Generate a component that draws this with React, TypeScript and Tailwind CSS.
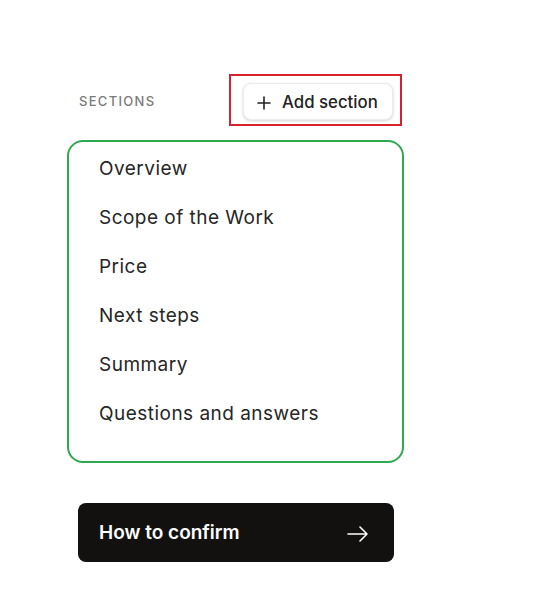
import React from "react";

const sections = [
  "Overview",
  "Scope of the Work",
  "Price",
  "Next steps",
  "Summary",
  "Questions and answers",
];

export default function App() {
  return (
    <div
      className="w-[550px] h-[613px] bg-white text-[#1f1f1f]"
      style={{ fontFamily: "Inter, 'Noto Sans', sans-serif" }}
    >
      <div className="pl-[67px] pt-[74px] w-[404px]">
        <div className="flex items-center justify-between h-[52px]">
          <span className="ml-[12px] mt-[4px] text-[13px] tracking-[0.1em] text-[#7a7a7a] font-medium">
            SECTIONS
          </span>
          <div className="border-2 border-[#d6232e] w-[173px] h-[52px] mr-[2px] pl-[12px] pt-[7px]">
            <button className="flex items-center gap-[11px] w-[150px] h-[37px] rounded-[8px] bg-white shadow-[0_1px_3px_rgba(0,0,0,0.18)] border border-[#ececec] pl-[13px] pt-[2px] text-[16.8px] font-medium text-[#222]">
              <svg width="14" height="14" viewBox="0 0 14 14" fill="none" stroke="#222" strokeWidth="1.6" strokeLinecap="round">
                <path d="M7 1v12M1 7h12" />
              </svg>
              <span>Add section</span>
            </button>
          </div>
        </div>
        <div className="mt-[14px] w-[337px] h-[323px] border-2 border-[#2ea94f] rounded-[16px] pt-[3px] pl-[30px]">
          {sections.map((s) => (
            <div key={s} className="h-[49px] flex items-center text-[19px] tracking-[0.025em] text-[#262626]">
              {s}
            </div>
          ))}
        </div>
        <div className="mt-[40px] ml-[11px] w-[316px] h-[59px] rounded-[8px] bg-[#121110] flex items-center justify-between pl-[21px] pr-[25px] pt-[2px]">
          <span className="text-white text-[19px] font-semibold">How to confirm</span>
          <svg width="22" height="16" viewBox="0 0 22 16" fill="none" stroke="white" strokeWidth="1.6" strokeLinecap="round" strokeLinejoin="round">
            <path d="M1 8h19M13 1l7 7-7 7" />
          </svg>
        </div>
      </div>
    </div>
  );
}
